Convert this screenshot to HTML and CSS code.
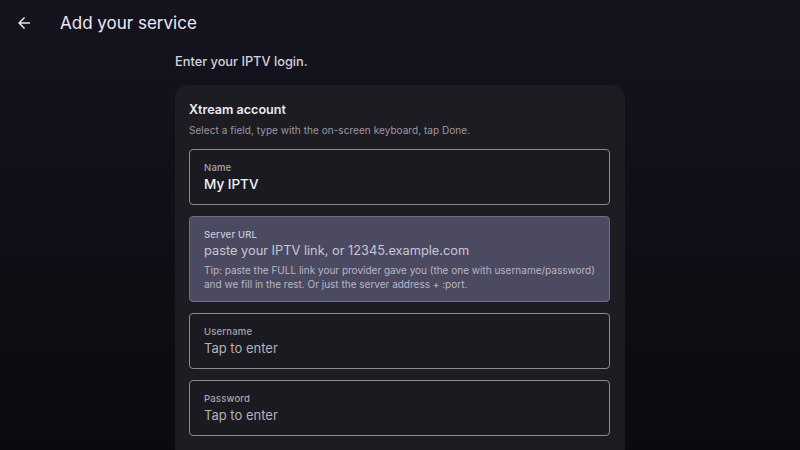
FILE: index.html
```html
<!DOCTYPE html>
<html lang="en">
<head>
<meta charset="utf-8">
<title>Add your service</title>
<link rel="stylesheet" href="styles.css">
</head>
<body>
<div class="screen">
  <header class="topbar">
    <button class="back" aria-label="Back">
      <svg width="18" height="18" viewBox="0 0 24 24"><path d="M20 11H7.83l5.59-5.59L12 4l-8 8 8 8 1.41-1.41L7.83 13H20v-2z" fill="#e6e4ee"/></svg>
    </button>
    <h1 class="title">Add your service</h1>
  </header>
  <main class="content">
    <p class="lead">Enter your IPTV login.</p>
    <section class="card">
      <h2 class="card-title">Xtream account</h2>
      <p class="card-sub">Select a field, type with the on-screen keyboard, tap Done.</p>
      <div class="fields">
        <div class="field">
          <div class="label">Name</div>
          <div class="value">My IPTV</div>
        </div>
        <div class="field active">
          <div class="label">Server URL</div>
          <div class="placeholder">paste your IPTV link, or 12345.example.com</div>
          <div class="tip">Tip: paste the FULL link your provider gave you (the one with username/password) and we fill in the rest. Or just the server address + :port.</div>
        </div>
        <div class="field">
          <div class="label">Username</div>
          <div class="placeholder">Tap to enter</div>
        </div>
        <div class="field">
          <div class="label">Password</div>
          <div class="placeholder">Tap to enter</div>
        </div>
      </div>
    </section>
  </main>
</div>
</body>
</html>
```

FILE: styles.css
```css
* { box-sizing: border-box; }
html, body { margin: 0; padding: 0; }
body {
  width: 800px;
  height: 450px;
  overflow: hidden;
  font-family: Inter, "Noto Sans", sans-serif;
  background: linear-gradient(180deg, #15131e 0%, #100f17 50%, #0b0a0e 100%);
  color: #e6e4ee;
}
.screen {
  width: 800px;
  height: 450px;
  display: flex;
  flex-direction: column;
  overflow: hidden;
}
.topbar {
  display: flex;
  align-items: center;
  height: 45px;
  padding-left: 14px;
  flex: none;
}
.back {
  width: 20px; height: 20px;
  padding: 0; margin: 0;
  border: 0; background: none;
  display: flex; align-items: center; justify-content: center;
}
.title {
  margin: 0 0 0 26px;
  font-size: 17px;
  font-weight: 400;
  color: #ebe9f2;
}
.content {
  width: 450px;
  margin-left: 175px;
  flex: 1;
  display: flex;
  flex-direction: column;
  min-height: 0;
}
.lead {
  margin: 8px 0 0;
  font-size: 12.8px;
  font-weight: 500;
  color: #d4d2dc;
  line-height: 18px;
}
.card {
  margin-top: 14px;
  background: #1d1c22;
  border-radius: 14px 14px 0 0;
  padding: 16px 15px 0 14px;
  flex: 1;
  overflow: hidden;
}
.card-title {
  margin: 0;
  font-size: 12.6px;
  font-weight: 600;
  color: #ecebf2;
  line-height: 18px;
}
.card-sub {
  margin: 4px 0 0;
  font-size: 10px;
  color: #9a98a3;
  line-height: 14px;
  letter-spacing: 0.05px;
}
.fields {
  margin-top: 12px;
  display: flex;
  flex-direction: column;
  gap: 11px;
}
.field {
  border: 1px solid #8c8a93;
  border-radius: 4px;
  background: #1b1a20;
  padding: 11px 14px 0;
  height: 56px;
}
.field.active {
  background: #4b4a60;
  border-color: #6f6d86;
  height: 86px;
}
.label {
  font-size: 9.5px;
  font-weight: 500;
  color: #a7a5ae;
  line-height: 13px;
  letter-spacing: 0.2px;
}
.field.active .label { color: #c9c7d6; }
.value {
  font-size: 13.5px;
  font-weight: 500;
  color: #f2f1f6;
  line-height: 20px;
}
.placeholder {
  font-size: 13px;
  font-weight: 400;
  color: #b3b1bb;
  line-height: 20px;
}
.field.active .placeholder { color: #c8c6d6; font-size: 12.8px; }
.tip {
  margin-top: 3px;
  font-size: 10px;
  color: #b8b6c6;
  line-height: 13.5px;
}
```
